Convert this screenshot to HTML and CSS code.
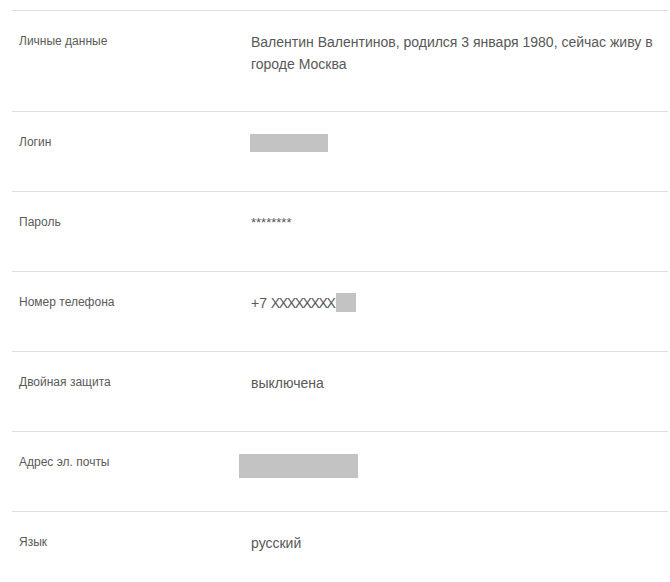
FILE: index.html
```html
<!DOCTYPE html>
<html lang="ru">
<head>
<meta charset="utf-8">
<title>Личные данные</title>
<link rel="stylesheet" href="styles.css">
</head>
<body>
<div class="settings">
  <div class="row">
    <div class="label">Личные данные</div>
    <div class="value">Валентин Валентинов, родился 3 января 1980, сейчас живу в городе Москва</div>
  </div>
  <div class="row">
    <div class="label">Логин</div>
    <div class="value"><div class="mask mask-login"></div></div>
  </div>
  <div class="row">
    <div class="label">Пароль</div>
    <div class="value password">********</div>
  </div>
  <div class="row">
    <div class="label">Номер телефона</div>
    <div class="value">+7 <span class="xs">XXXXXXXX</span><span class="mask mask-phone"></span></div>
  </div>
  <div class="row">
    <div class="label">Двойная защита</div>
    <div class="value">выключена</div>
  </div>
  <div class="row">
    <div class="label">Адрес эл. почты</div>
    <div class="value"><div class="mask mask-email"></div></div>
  </div>
  <div class="row">
    <div class="label">Язык</div>
    <div class="value">русский</div>
  </div>
</div>
</body>
</html>
```
FILE: styles.css
```css
html, body {
  margin: 0;
  padding: 0;
  background: #ffffff;
}

body {
  font-family: "Liberation Sans", Arial, sans-serif;
  color: #555555;
}

.settings {
  margin: 10px 0 0 12px;
  width: 656px;
}

.row {
  display: grid;
  grid-template-columns: 238px 1fr;
  box-sizing: border-box;
  min-height: 80px;
  padding: 19px 0 37px;
  border-top: 1px solid #dedede;
  line-height: 22px;
}

.label {
  padding-left: 7px;
  font-size: 12px;
  color: #5a5a5a;
}

.value {
  padding: 1px 0 0 1px;
  margin-bottom: -1px;
  font-size: 14px;
  color: #585858;
}

.password {
  font-size: 13px;
}

.xs {
  letter-spacing: -1.4px;
}

.mask {
  background: #c3c3c3;
}

.mask-login {
  width: 78px;
  height: 18px;
  margin: 2px 0 1px -1px;
}

.mask-phone {
  display: inline-block;
  vertical-align: top;
  width: 20px;
  height: 19px;
  margin: 1px 0 0 2px;
}

.mask-email {
  width: 119px;
  height: 24px;
  margin: 2px 0 -5px -12px;
}
```
